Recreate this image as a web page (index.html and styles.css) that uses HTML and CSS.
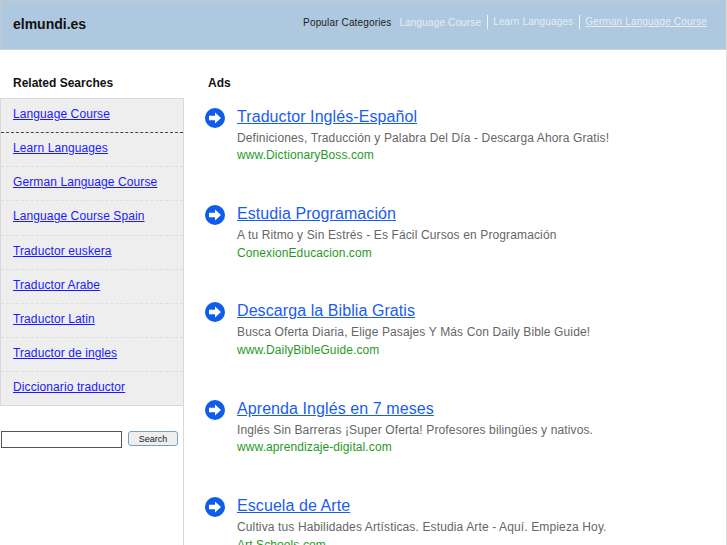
FILE: index.html
```html
<!DOCTYPE html>
<html lang="en">
<head>
    <meta charset="UTF-8">
    <title>elmundi.es</title>
    <link rel="stylesheet" href="styles.css">
</head>
<body>
    <div class="header">
        <div class="logo">elmundi.es</div>
        <div class="popular">
            <span class="popular-title">Popular Categories</span>
            <a href="#" class="cat">Language Course</a>
            <a href="#" class="cat sep">Learn Languages</a>
            <a href="#" class="cat sep under">German Language Course</a>
        </div>
    </div>

    <div class="main">
        <div class="sidebar">
            <h3 class="side-title">Related Searches</h3>
            <div class="side-body">
                <ul class="links">
                    <li class="dark"><a href="#">Language Course</a></li>
                    <li><a href="#">Learn Languages</a></li>
                    <li><a href="#">German Language Course</a></li>
                    <li><a href="#">Language Course Spain</a></li>
                    <li><a href="#">Traductor euskera</a></li>
                    <li><a href="#">Traductor Arabe</a></li>
                    <li><a href="#">Traductor Latin</a></li>
                    <li><a href="#">Traductor de ingles</a></li>
                    <li><a href="#">Diccionario traductor</a></li>
                </ul>
                <form class="search">
                    <input type="text" class="search-input">
                    <button type="button" class="search-btn">Search</button>
                </form>
            </div>
        </div>

        <div class="content">
            <h3 class="ads-title">Ads</h3>

            <div class="ad">
                <svg class="arrow" viewBox="0 0 20 20"><circle cx="10" cy="10" r="10" fill="#0f5ce8"/><path d="M4 7.8h6V4.4L16 10l-6 5.600V12.200H4z" fill="#fff"/></svg>
                <div>
                    <a href="#" class="ad-link">Traductor Inglés-Español</a>
                    <p class="ad-desc">Definiciones, Traducción y Palabra Del Día - Descarga Ahora Gratis!</p>
                    <p class="ad-url">www.DictionaryBoss.com</p>
                </div>
            </div>

            <div class="ad">
                <svg class="arrow" viewBox="0 0 20 20"><circle cx="10" cy="10" r="10" fill="#0f5ce8"/><path d="M4 7.8h6V4.4L16 10l-6 5.600V12.200H4z" fill="#fff"/></svg>
                <div>
                    <a href="#" class="ad-link">Estudia Programación</a>
                    <p class="ad-desc">A tu Ritmo y Sin Estrés - Es Fácil Cursos en Programación</p>
                    <p class="ad-url">ConexionEducacion.com</p>
                </div>
            </div>

            <div class="ad">
                <svg class="arrow" viewBox="0 0 20 20"><circle cx="10" cy="10" r="10" fill="#0f5ce8"/><path d="M4 7.8h6V4.4L16 10l-6 5.600V12.200H4z" fill="#fff"/></svg>
                <div>
                    <a href="#" class="ad-link">Descarga la Biblia Gratis</a>
                    <p class="ad-desc">Busca Oferta Diaria, Elige Pasajes Y Más Con Daily Bible Guide!</p>
                    <p class="ad-url">www.DailyBibleGuide.com</p>
                </div>
            </div>

            <div class="ad">
                <svg class="arrow" viewBox="0 0 20 20"><circle cx="10" cy="10" r="10" fill="#0f5ce8"/><path d="M4 7.8h6V4.4L16 10l-6 5.600V12.200H4z" fill="#fff"/></svg>
                <div>
                    <a href="#" class="ad-link">Aprenda Inglés en 7 meses</a>
                    <p class="ad-desc">Inglés Sin Barreras ¡Super Oferta! Profesores bilingües y nativos.</p>
                    <p class="ad-url">www.aprendizaje-digital.com</p>
                </div>
            </div>

            <div class="ad">
                <svg class="arrow" viewBox="0 0 20 20"><circle cx="10" cy="10" r="10" fill="#0f5ce8"/><path d="M4 7.8h6V4.4L16 10l-6 5.600V12.200H4z" fill="#fff"/></svg>
                <div>
                    <a href="#" class="ad-link">Escuela de Arte</a>
                    <p class="ad-desc">Cultiva tus Habilidades Artísticas. Estudia Arte - Aquí. Empieza Hoy.</p>
                    <p class="ad-url">Art.Schools.com</p>
                </div>
            </div>
        </div>
    </div>
</body>
</html>
```

FILE: styles.css
```css
html, body {
    height: 545px;
    overflow: hidden;
}

body {
    margin: 0;
    padding: 0;
    font-family: "Liberation Sans", Arial, sans-serif;
    background-color: #fff;
    border-right: 1px solid #ddd;
    box-sizing: border-box;
}

.header {
    height: 50px;
    box-sizing: border-box;
    background-color: #aec8df;
    border-top: 1px solid #c4c8cc;
    border-bottom: 1px solid #c2d2e0;
    border-left: 1px solid #c4c8cc;
    display: flex;
    justify-content: space-between;
    padding: 0 19px 0 12px;
}

.logo {
    font-size: 14px;
    font-weight: bold;
    color: #111;
    line-height: 47px;
}

.popular {
    display: flex;
    align-items: center;
    height: 14px;
    margin-top: 14px;
    font-size: 10px;
}

.popular-title {
    color: #222;
    letter-spacing: 0.15px;
    margin-right: 8px;
}

.cat {
    color: #e6edf4;
    text-decoration: none;
    letter-spacing: 0.15px;
}

.cat.sep {
    border-left: 1px solid #f0f4f8;
    margin-left: 6px;
    padding-left: 5px;
    line-height: 14px;
}

.cat.under {
    text-decoration: underline;
}

.main {
    display: flex;
    height: 495px;
}

.sidebar {
    width: 184px;
    flex-shrink: 0;
    display: flex;
    flex-direction: column;
}

.side-title {
    margin: 0;
    padding: 26px 0 0 13px;
    height: 48px;
    box-sizing: border-box;
    font-size: 12px;
    line-height: 14px;
    color: #111;
}

.side-body {
    flex: 1;
    border-right: 1px solid #d8d8d8;
}

.links {
    list-style: none;
    margin: 0;
    padding: 0;
    background-color: #eee;
    border-top: 1px solid #d8d8d8;
    border-bottom: 1px solid #d8d8d8;
    border-left: 1px solid #d8d8d8;
}

.links li {
    height: 33.150px;
    border-bottom: 1px dashed #ddd;
    padding-left: 12px;
    line-height: 31px;
    font-size: 12px;
    letter-spacing: 0.1px;
}

.links li:last-child {
    border-bottom: 0;
}

.links li.dark {
    border-bottom-color: #444;
}

.links a {
    color: #1a1aff;
}

.search {
    display: flex;
    align-items: flex-start;
    margin: 25px 0 0 1px;
}

.search-input {
    width: 121px;
    height: 17px;
    box-sizing: border-box;
    border: 1px solid #555;
    padding: 0;
    margin: 0;
}

.search-btn {
    width: 50px;
    height: 15px;
    box-sizing: border-box;
    margin-left: 6px;
    padding: 0;
    font-family: "Liberation Sans", Arial, sans-serif;
    font-size: 9px;
    line-height: 12px;
    color: #222;
    background-color: #eee;
    border: 1px solid #7e9db9;
    border-radius: 3px;
}

.content {
    flex: 1;
    padding-left: 24px;
    min-width: 0;
}

.ads-title {
    margin: 0;
    padding-top: 26px;
    height: 56.600px;
    box-sizing: border-box;
    font-size: 12px;
    line-height: 14px;
    color: #111;
}

.ad {
    display: flex;
    gap: 12px;
    height: 97.400px;
}

.arrow {
    width: 20px;
    height: 20px;
    margin: 1px 0 0 -3px;
    flex-shrink: 0;
}

.ad-link {
    font-size: 16px;
    line-height: 20px;
    letter-spacing: 0.08px;
    color: #1a5cf0;
    display: inline-block;
}

.ad-desc {
    margin: 4px 0 0;
    font-size: 12px;
    line-height: 15px;
    letter-spacing: 0.13px;
    color: #666;
}

.ad-url {
    margin: 2.600px 0 0;
    font-size: 12px;
    line-height: 15px;
    letter-spacing: 0.1px;
    color: #1f9a1f;
}
```
